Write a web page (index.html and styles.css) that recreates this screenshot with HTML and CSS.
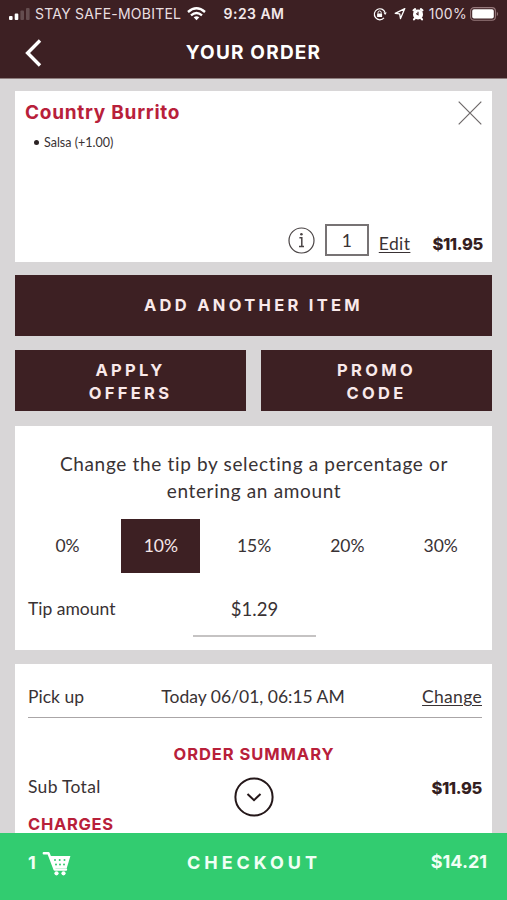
FILE: index.html
```html
<!DOCTYPE html>
<html lang="en">
<head>
<meta charset="utf-8">
<title>Your Order</title>
<link rel="stylesheet" href="styles.css">
</head>
<body>
<div class="app">
  <header class="header">
    <div class="status">
      <div class="status-left">
        <svg class="signal" width="22" height="14" viewBox="0 0 22 14"><g fill="#fff"><rect x="0" y="9" width="3.6" height="4" rx="1"/><rect x="5.7" y="6.5" width="3.6" height="6.5" rx="1"/></g><g fill="#fff" opacity=".2"><rect x="11.4" y="3.5" width="3.6" height="9.5" rx="1"/><rect x="17" y="1" width="3.6" height="12" rx="1"/></g></svg>
        <span class="carrier">STAY SAFE-MOBITEL</span>
        <svg class="wifi" width="19" height="14" viewBox="0 0 19 14" fill="none" stroke="#fff" stroke-width="2.4"><path d="M1 5Q9.5-2.4 18 5"/><path d="M4 8.4Q9.5 3.8 15 8.4"/><path d="M6.7 10.2Q9.5 8.2 12.3 10.2L9.5 13.2Z" fill="#fff" stroke="none"/></svg>
      </div>
      <span class="time">9:23 AM</span>
      <div class="status-right">
        <svg width="14" height="14" viewBox="0 0 14 14"><path d="M12.1 5.6A5.5 5.5 0 1 0 11 10.9" fill="none" stroke="#fff" stroke-width="1.2"/><path d="M10.4 5.6h3.4l-1.7 2.5z" fill="#fff"/><rect x="4.1" y="6.4" width="5" height="3.6" rx=".5" fill="#fff"/><path d="M5 6.6V5.6a1.6 1.6 0 0 1 3.2 0v1" fill="none" stroke="#fff"/></svg>
        <svg class="location" width="12" height="13" viewBox="0 0 12 13" fill="none" stroke="#fff" stroke-width="1.3" stroke-linejoin="round"><path d="M10.8 1.6L1.2 6.3l4.5.5.8 4.8z"/></svg>
        <svg class="alarm" width="12" height="14" viewBox="0 0 12 14"><circle cx="6" cy="7.4" r="5" fill="#fff"/><path d="M1.6 3.4L3.1 2.2M10.4 3.4L8.9 2.2M2.8 11.4L2 12.4M9.2 11.4l.8 1" stroke="#fff" stroke-width="2.2" stroke-linecap="round"/><path d="M6 4.7v3L4.2 6.5" fill="none" stroke="#3d2023" stroke-width="1.1"/></svg>
        <span class="charge">100%</span>
        <svg class="battery" width="29" height="14" viewBox="0 0 29 14"><rect x=".6" y=".6" width="24.8" height="12.6" rx="3.5" fill="none" stroke="#97797c" stroke-width="1.1"/><rect x="2.2" y="2.2" width="21.6" height="9.4" rx="1.8" fill="#fff"/><path d="M26.8 4.5q2.4 2.4 0 4.8z" fill="#97797c"/></svg>
      </div>
    </div>
    <div class="nav">
      <svg class="back" width="17" height="28" viewBox="0 0 17 28" fill="none" stroke="#fff" stroke-width="3.4"><path d="M15 1.5L2.6 14 15 26.5"/></svg>
      <h1>YOUR ORDER</h1>
    </div>
  </header>

  <main class="content">
    <section class="card item">
      <div class="item-head">
        <h2>Country Burrito</h2>
        <svg class="close" width="24" height="24" viewBox="0 0 24 24" stroke="#6d6869" stroke-width="1.2"><path d="M.7.7l22.6 22.6M23.3.7L.7 23.3"/></svg>
      </div>
      <div class="modifier"><i class="bullet"></i><span>Salsa (+1.00)</span></div>
      <div class="item-actions">
        <svg class="info" width="27" height="27" viewBox="0 0 27 27" fill="none" stroke="#4a4445" stroke-width="1.2"><circle cx="13.5" cy="13.5" r="12.5"/><path d="M11.4 10.8h2.4v8.3M11 19.4h5" stroke-width="1.5"/><circle cx="13.4" cy="7.3" r="1.3" fill="#4a4445" stroke="none"/></svg>
        <span class="qty">1</span>
        <a class="edit">Edit</a>
        <b class="price">$11.95</b>
      </div>
    </section>

    <div class="button add"><span>ADD ANOTHER ITEM</span></div>
    <div class="pair">
      <div class="button"><span>APPLY</span><span>OFFERS</span></div>
      <div class="button"><span>PROMO</span><span>CODE</span></div>
    </div>

    <section class="card tip">
      <p>Change the tip by selecting a percentage or<br>entering an amount</p>
      <div class="options">
        <span>0%</span><span class="selected">10%</span><span>15%</span><span>20%</span><span>30%</span>
      </div>
      <div class="amount"><span class="amount-label">Tip amount</span><span class="amount-value">$1.29</span></div>
    </section>

    <section class="card summary">
      <div class="pickup"><span>Pick up</span><span>Today 06/01, 06:15 AM</span><a class="change">Change</a></div>
      <h3>ORDER SUMMARY</h3>
      <div class="subtotal">
        <span class="sub-label">Sub Total</span>
        <svg class="expand" width="40" height="40" viewBox="0 0 40 40" fill="none" stroke="#241719" stroke-width="2"><circle cx="20" cy="20" r="18.6"/><path d="M13.5 17l6.5 6.2 6.5-6.2"/></svg>
        <b class="price">$11.95</b>
      </div>
      <h4>CHARGES</h4>
    </section>
  </main>

  <footer class="footer">
    <div class="cart"><span>1</span>
      <svg width="29" height="25" viewBox="0 0 29 25"><path d="M1.8 2.3h4.7l6.2 16.2H24" fill="none" stroke="#fff" stroke-width="2.4" stroke-linecap="round" stroke-linejoin="round"/><path d="M7.5 5H28.4L24.8 17H12z" fill="#fff"/><g fill="#32cc70"><circle cx="13" cy="9" r="1"/><circle cx="17.7" cy="9" r="1"/><circle cx="22.5" cy="9" r="1"/><circle cx="14" cy="13.6" r="1"/><circle cx="18" cy="13.6" r="1"/><circle cx="22" cy="13.6" r="1"/></g><circle cx="14.5" cy="22.3" r="2.1" fill="#fff"/><circle cx="21.5" cy="22.3" r="2.1" fill="#fff"/></svg>
    </div>
    <span class="checkout">CHECKOUT</span>
    <b class="total">$14.21</b>
  </footer>
</div>
</body>
</html>
```
FILE: styles.css
```css
* { box-sizing: border-box; }
body { margin: 0; }
h1, h2, h3, h4, p { margin: 0; }
svg { display: block; flex: none; }
span, a, b { white-space: nowrap; }
.app { width: 507px; height: 900px; overflow: hidden; display: flex; flex-direction: column; background: #d8d6d7; color: #393234; font-family: Lato, sans-serif; font-size: 17.5px; font-variant-ligatures: none; }
.header { height: 79px; flex: none; background: #3d2023; border-bottom: 1px solid #8d7d7d; color: #fff; }
.status { height: 27px; padding: 0 8px 0 9px; display: grid; grid-template-columns: 1fr auto 1fr; align-items: center; font-family: Inter, sans-serif; font-size: 14px; }
.status-left, .status-right { display: flex; align-items: center; }
.status-right { justify-content: flex-end; }
.carrier { margin-left: 4px; letter-spacing: .23px; color: #e9dfe0; }
.wifi { margin-left: 6px; }
.time { font-weight: 600; letter-spacing: .45px; color: #f3e9ea; }
.location { margin-left: 7px; }
.alarm { margin-left: 6px; }
.charge { margin: 0 3px 0 5px; letter-spacing: .3px; color: #e9dfe0; }
.nav { height: 51px; display: grid; grid-template-columns: 1fr auto 1fr; align-items: center; padding: 0 25px; }
.nav h1 { font: 700 19px/24px Inter, sans-serif; letter-spacing: 1.2px; }
.content { flex: 1; min-height: 0; overflow: hidden; padding: 12px 15px 0; }
.card { background: #fff; }
.item { height: 171px; padding: 10px 9px 6px 10px; display: flex; flex-direction: column; }
.item-head { display: flex; justify-content: space-between; height: 24px; }
.item-head h2 { font: 700 19px/24px Inter, sans-serif; letter-spacing: .75px; color: #b8203a; }
.close { margin-right: 1px; }
.modifier { display: flex; align-items: center; gap: 5px; margin: 9px 0 0 9px; height: 17px; font-size: 12.5px; }
.bullet { width: 5px; height: 5px; border-radius: 50%; background: #2b2324; }
.item-actions { margin-top: auto; height: 32px; display: flex; align-items: center; justify-content: flex-end; }
.info { margin-right: 10px; }
.qty { width: 44px; height: 32px; border: 2px solid #777374; text-align: center; line-height: 30px; margin-right: 10px; }
.edit { letter-spacing: .4px; text-decoration: underline; text-underline-offset: 2px; margin: 6px 22px 0 0; }
.price { font: 800 16.5px/20px Inter, sans-serif; letter-spacing: -.35px; color: #341e21; }
.item-actions .price { margin-top: 7px; }
.button { height: 61px; background: #3d2023; color: #f9e9ea; display: flex; flex-direction: column; align-items: center; justify-content: center; font: 700 16.5px/23px Inter, sans-serif; letter-spacing: 3.3px; }
.add { margin: 13px 0 14px; }
.pair { display: grid; grid-template-columns: 1fr 1fr; gap: 15px; margin-bottom: 15px; }
.pair .button { padding-top: 3px; }
.tip { height: 224px; padding: 25px 12px 0 13px; }
.tip p { text-align: center; font-size: 19px; letter-spacing: .66px; line-height: 26.5px; }
.options { display: grid; grid-template-columns: repeat(5, 79px); gap: 14.3px; height: 54px; margin-top: 15px; line-height: 53px; text-align: center; }
.selected { background: #3d2023; color: #f5e7e9; }
.amount { display: flex; height: 64px; padding-top: 22px; line-height: 28px; }
.amount-label { width: 165px; }
.amount-value { width: 123px; height: 42px; text-align: center; border-bottom: 2px solid #c5c3c3; font-size: 18.5px; }
.summary { height: 190px; margin-top: 14px; padding: 13px 10px 0 13px; }
.pickup { height: 41px; display: flex; justify-content: space-between; border-bottom: 1px solid #aaa6a7; line-height: 40px; }
.change { letter-spacing: .3px; text-decoration: underline; text-underline-offset: 2px; }
.summary h3 { margin-top: 24px; padding-right: 2px; text-align: center; font: 700 16.5px/24px Inter, sans-serif; color: #b8203a; letter-spacing: .95px; }
.subtotal { height: 40px; margin-top: 11px; display: grid; grid-template-columns: 206px 40px 1fr; }
.sub-label { line-height: 20px; letter-spacing: .3px; }
.subtotal .price { text-align: right; margin-top: 1px; }
.summary h4 { font: 700 16.5px/22px Inter, sans-serif; color: #b8203a; letter-spacing: .7px; margin-top: -4px; }
.footer { height: 67px; flex: none; background: #32cc70; color: #f0fff5; display: grid; grid-template-columns: 159px 1fr auto; align-items: center; padding: 0 20px 7px 28px; font: 700 18px/24px Inter, sans-serif; }
.cart { display: flex; align-items: center; gap: 6px; }
.checkout { letter-spacing: 3.95px; }
.total { text-align: right; font-weight: 700; margin-top: -2px; }
```
